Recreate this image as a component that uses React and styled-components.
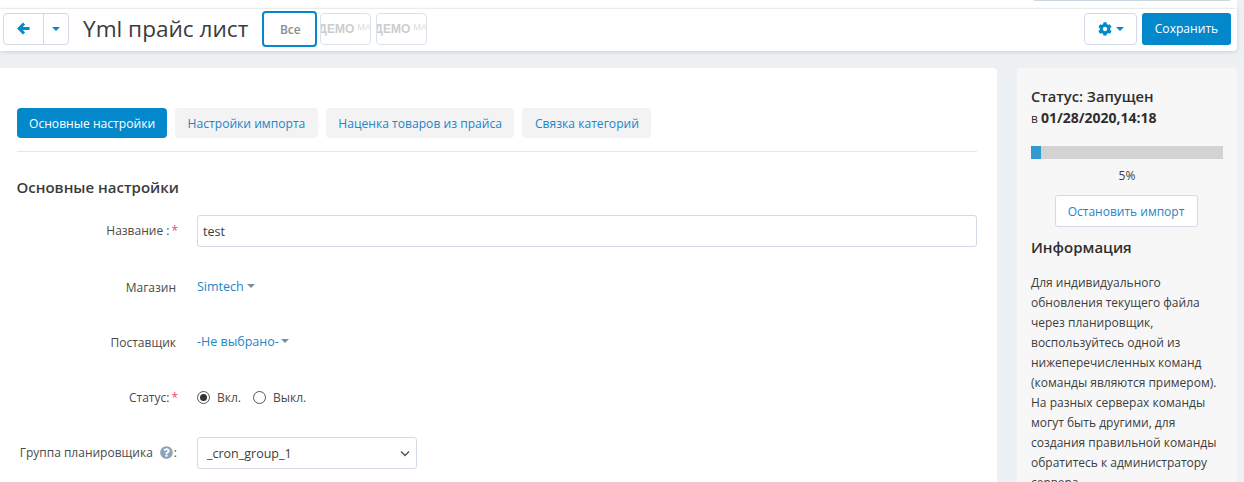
import styled, { createGlobalStyle } from 'styled-components';
import { FaCog, FaQuestionCircle } from 'react-icons/fa';

const GlobalStyle = createGlobalStyle`
  html, body {
    margin: 0;
    height: 482px;
    overflow: hidden;
    background: #edf1f4;
    font-family: "Open Sans", "Noto Sans", sans-serif;
    font-size: 12px;
    color: #3d3d3d;
  }
  * { box-sizing: border-box; }
`;

const Page = styled.div`
  width: 1244px;
  height: 482px;
  overflow: hidden;
  display: flex;
  flex-direction: column;
`;

const TopStrip = styled.div`
  flex: none;
  width: 1237px;
  height: 9px;
  background: #fff;
  border-bottom: 1px solid #f3f4f6;
  display: flex;
  justify-content: flex-end;
  padding-right: 7px;
`;

const TopStripBar = styled.div`
  width: 196px;
  height: 1px;
  background: #ccd6e0;
`;

const Toolbar = styled.div`
  flex: none;
  width: 1237px;
  height: 42px;
  background: #fff;
  border-radius: 0 0 4px 0;
  box-shadow: 0 1px 4px rgba(0, 0, 0, 0.14);
  display: flex;
  align-items: center;
  padding: 0 6px 3px 3px;
`;

const BtnGroup = styled.div`
  display: flex;
  height: 32px;
  border: 1px solid #d2dbe5;
  border-radius: 4px;
  color: #0388cc;
`;

const GroupPart = styled.div`
  width: ${(p) => p.$w}px;
  display: flex;
  align-items: center;
  justify-content: center;
  & + & { border-left: 1px solid #d2dbe5; }
`;

const Caret = styled.span`
  display: inline-block;
  width: 0;
  height: 0;
  border-left: 4px solid transparent;
  border-right: 4px solid transparent;
  border-top: 4px solid ${(p) => p.$color || '#0388cc'};
  margin-left: ${(p) => p.$ml || 0}px;
`;

const Title = styled.h1`
  margin: 0 14px 0 14px;
  font-size: 22.6px;
  font-weight: 400;
  line-height: 32px;
  color: #3b3b3b;
  white-space: nowrap;
`;

const StoreTabs = styled.div`
  display: flex;
  align-items: center;
`;

const AllTab = styled.div`
  width: 55px;
  height: 36px;
  border: 2px solid #0388cc;
  border-radius: 4px;
  padding: 2px 0 0 1px;
  display: flex;
  align-items: center;
  justify-content: center;
  font-size: 12px;
  font-weight: 600;
  color: #8c8c8c;
`;

const StoreTab = styled.div`
  width: 51px;
  height: 32px;
  border: 1px solid #dbe2e9;
  border-radius: 4px;
  display: flex;
  align-items: center;
  overflow: hidden;
  white-space: nowrap;
  font-family: "Liberation Sans", sans-serif;
  font-size: 12px;
  font-weight: 700;
  color: #cdcdcd;
  margin-left: ${(p) => p.$ml}px;
`;

const StoreName = styled.span`
  margin-left: -3px;
`;

const StoreSuffix = styled.span`
  font-size: 9px;
  font-weight: 400;
  color: #dadada;
  margin: -3px 0 0 3px;
`;

const ToolbarRight = styled.div`
  margin-left: auto;
  display: flex;
  gap: 5px;
`;

const GearButton = styled.div`
  width: 53px;
  height: 32px;
  border: 1px solid #d2dbe5;
  border-radius: 4px;
  display: flex;
  align-items: center;
  justify-content: center;
  color: #0388cc;
`;

const SaveButton = styled.div`
  width: 89px;
  height: 32px;
  background: #0388cc;
  border-radius: 3px;
  color: #fff;
  font-size: 12.1px;
  display: flex;
  align-items: center;
  justify-content: center;
`;

const Columns = styled.div`
  display: flex;
  gap: 20px;
  margin-top: 17px;
  flex: 1;
  min-height: 0;
  align-items: stretch;
`;

const Main = styled.main`
  width: 997px;
  background: #fff;
  border-radius: 0 4px 0 0;
  padding: 40px 20px 0 17px;
`;

const Tabs = styled.div`
  display: flex;
  gap: 8px;
  height: 44px;
  padding-bottom: 14px;
  border-bottom: 1px solid #e3e7ee;
`;

const Tab = styled.div`
  height: 30px;
  padding: 0 ${(p) => (p.$active ? 12 : 12.5)}px;
  border-radius: 4px;
  display: flex;
  align-items: center;
  font-size: 12.1px;
  white-space: nowrap;
  background: ${(p) => (p.$active ? '#0388cc' : '#f3f3f4')};
  color: ${(p) => (p.$active ? '#fff' : '#2285c8')};
`;

const SectionTitle = styled.h3`
  margin: 25px 0 0 -0.5px;
  font-size: 15px;
  line-height: 20px;
  font-weight: 600;
  color: #3b3b3b;
`;

const Row = styled.div`
  display: flex;
  align-items: center;
  height: ${(p) => p.$h}px;
  margin-top: ${(p) => p.$mt}px;
`;

const Label = styled.label`
  width: 160px;
  margin-right: 20px;
  padding: ${(p) => p.$pad || '0'};
  flex: none;
  display: flex;
  justify-content: flex-end;
  align-items: center;
  font-size: 12px;
  color: #4a4a4a;
  white-space: nowrap;
`;

const Star = styled.span`
  color: #f0476b;
  margin: 0 -1px 0 2px;
`;

const TextInput = styled.div`
  width: 780px;
  height: 32px;
  border: 1px solid #d2dbe5;
  border-radius: 3px;
  display: flex;
  align-items: center;
  padding-left: 5px;
  font-size: 12.5px;
  color: #3d3d3d;
`;

const LinkSelect = styled.div`
  display: flex;
  align-items: center;
  font-size: 12.5px;
  color: #2285c8;
`;

const RadioGroup = styled.div`
  display: flex;
  align-items: center;
  font-size: 12px;
  color: #4a4a4a;
`;

const Radio = styled.span`
  width: 13px;
  height: 13px;
  border: 1px solid #555;
  border-radius: 50%;
  display: inline-flex;
  align-items: center;
  justify-content: center;
  margin: 0 7px 0 ${(p) => p.$ml || 0}px;
  &::after {
    content: '';
    display: ${(p) => (p.$on ? 'block' : 'none')};
    width: 7px;
    height: 7px;
    border-radius: 50%;
    background: #333;
  }
`;

const SelectBox = styled.div`
  width: 220px;
  height: 32px;
  border: 1px solid #d2dbe5;
  border-radius: 3px;
  display: flex;
  align-items: center;
  justify-content: space-between;
  padding: 0 5px 0 9px;
  font-size: 12.5px;
  color: #3d3d3d;
`;

const Help = styled.span`
  color: #8da3b8;
  display: inline-flex;
  margin: 0 1px 0 7px;
  font-size: 13px;
`;

const Side = styled.aside`
  width: 220px;
  background: #f7f7f7;
  border-radius: 4px 4px 0 0;
  padding: 19px 14px 0;
`;

const StatusLine = styled.div`
  font-size: 14.7px;
  font-weight: 600;
  line-height: 18px;
  color: #2e2e2e;
`;

const DateLine = styled.div`
  font-size: 12px;
  line-height: 20px;
  margin-top: 3px;
  color: #2e2e2e;
  b { font-weight: 700; font-size: 14px; }
`;

const Track = styled.div`
  height: 13px;
  background: #d3d3d3;
  margin-top: 17px;
  width: 192px;
`;

const Fill = styled.div`
  height: 100%;
  background: #3499cf;
`;

const Percent = styled.div`
  text-align: center;
  font-size: 12px;
  line-height: 16px;
  margin-top: 9px;
  width: 192px;
`;

const StopWrap = styled.div`
  display: flex;
  justify-content: center;
  width: 190px;
  margin-top: 11px;
`;

const StopButton = styled.div`
  width: 143px;
  height: 32px;
  background: #fff;
  border: 1px solid #d2dbe5;
  border-radius: 3px;
  display: flex;
  align-items: center;
  justify-content: center;
  color: #2285c8;
  font-size: 12px;
`;

const InfoTitle = styled.h3`
  margin: 9px 0 0;
  font-size: 15px;
  line-height: 22px;
  font-weight: 600;
  color: #2e2e2e;
`;

const InfoText = styled.p`
  margin: 15px 0 0;
  font-size: 12px;
  line-height: 20px;
  color: #3d3d3d;
  width: 192px;
`;

export default function App() {
  return (
    <Page>
      <GlobalStyle />
      <TopStrip><TopStripBar /></TopStrip>
      <Toolbar>
        <BtnGroup>
          <GroupPart $w={39}>
            <svg width="13" height="13" viewBox="0 0 13 13" fill="none" stroke="#0388cc" strokeWidth="3">
              <path d="M7 1.5L2.2 6.5 7 11.5M3 6.5h9.5" />
            </svg>
          </GroupPart>
          <GroupPart $w={25}><Caret /></GroupPart>
        </BtnGroup>
        <Title>Yml прайс лист</Title>
        <StoreTabs>
          <AllTab>Все</AllTab>
          <StoreTab $ml={3}><StoreName>ДЕМО</StoreName><StoreSuffix>МА</StoreSuffix></StoreTab>
          <StoreTab $ml={5}><StoreName>ДЕМО</StoreName><StoreSuffix>МА</StoreSuffix></StoreTab>
        </StoreTabs>
        <ToolbarRight>
          <GearButton><FaCog size={14} /><Caret $ml={4} /></GearButton>
          <SaveButton>Сохранить</SaveButton>
        </ToolbarRight>
      </Toolbar>
      <Columns>
        <Main>
          <Tabs>
            <Tab $active>Основные настройки</Tab>
            <Tab>Настройки импорта</Tab>
            <Tab>Наценка товаров из прайса</Tab>
            <Tab>Связка категорий</Tab>
          </Tabs>
          <SectionTitle>Основные настройки</SectionTitle>
          <Row $h={32} $mt={18}>
            <Label $pad="0 0 1px">Название :<Star>*</Star></Label>
            <TextInput>test</TextInput>
          </Row>
          <Row $h={24} $mt={27}>
            <Label $pad="2px 1px 0 0">Магазин</Label>
            <LinkSelect>Simtech<Caret $color="#7f8c99" $ml={3} /></LinkSelect>
          </Row>
          <Row $h={24} $mt={31}>
            <Label $pad="2px 1px 0 0">Поставщик</Label>
            <LinkSelect>-Не выбрано-<Caret $color="#7f8c99" $ml={2} /></LinkSelect>
          </Row>
          <Row $h={24} $mt={32}>
            <Label>Статус:<Star>*</Star></Label>
            <RadioGroup>
              <Radio $on />Вкл.
              <Radio $ml={12} />Выкл.
            </RadioGroup>
          </Row>
          <Row $h={32} $mt={28}>
            <Label $pad="0 0 1px">Группа планировщика<Help><FaQuestionCircle /></Help>:</Label>
            <SelectBox>
              _cron_group_1
              <svg width="12" height="12" viewBox="0 0 12 12" fill="none" stroke="#555" strokeWidth="1.5">
                <path d="M2 4.5l4 4 4-4" />
              </svg>
            </SelectBox>
          </Row>
        </Main>
        <Side>
          <StatusLine>Статус: Запущен</StatusLine>
          <DateLine>в <b>01/28/2020,14:18</b></DateLine>
          <Track><Fill style={{ width: '5%' }} /></Track>
          <Percent>5%</Percent>
          <StopWrap><StopButton>Остановить импорт</StopButton></StopWrap>
          <InfoTitle>Информация</InfoTitle>
          <InfoText>
            Для индивидуального обновления текущего файла через планировщик, воспользуйтесь одной из
            нижеперечисленных команд (команды являются примером). На разных серверах команды могут быть
            другими, для создания правильной команды обратитесь к администратору сервера.
          </InfoText>
        </Side>
      </Columns>
    </Page>
  );
}
